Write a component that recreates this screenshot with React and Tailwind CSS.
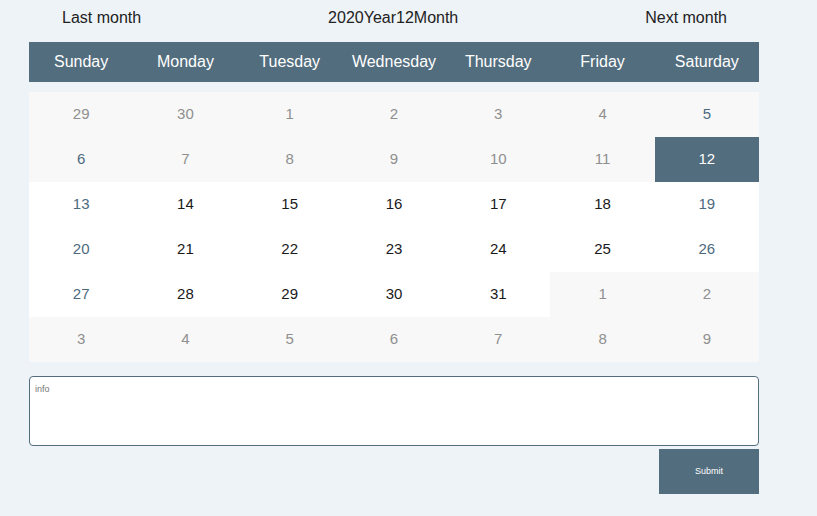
import { useState } from "react"

const WEEK = ["Sunday", "Monday", "Tuesday", "Wednesday", "Thursday", "Friday", "Saturday"]

function buildDays() {
  const days = []
  days.push({ n: 29, cur: false }, { n: 30, cur: false })
  for (let i = 1; i <= 31; i++) days.push({ n: i, cur: true })
  for (let i = 1; i <= 9; i++) days.push({ n: i, cur: false })
  return days
}

export default function App() {
  const [selected, setSelected] = useState(12)
  const [info, setInfo] = useState("")
  const days = buildDays()

  return (
    <div className="min-h-[516px] w-full bg-[#eef3f7] font-['Liberation_Sans',Arial,sans-serif]">
      <div className="ml-[29px] w-[730px]">
        <div className="h-[36px] pl-[33px] pr-[32px] flex items-center justify-between text-[16px] text-[#222]">
          <span className="cursor-pointer">Last month</span>
          <span>2020Year12Month</span>
          <span className="cursor-pointer">Next month</span>
        </div>

        <div className="mt-[6px] h-[40px] grid grid-cols-7 bg-[#526d7d] text-white text-[16px]">
          {WEEK.map(w => (
            <div key={w} className="flex items-center justify-center">{w}</div>
          ))}
        </div>

        <div className="mt-[10px] grid grid-cols-7">
          {days.map((d, i) => {
            const weekend = i % 7 === 0 || i % 7 === 6
            const past = !d.cur || d.n < selected
            const isSel = d.cur && d.n === selected
            let cls = "h-[45px] flex items-center justify-center text-[15px] cursor-pointer "
            if (isSel) cls += "bg-[#526d7d] text-white"
            else {
              cls += past ? "bg-[#f8f8f8] " : "bg-white "
              if (d.cur && weekend) cls += "text-[#4d6a80]"
              else if (past) cls += "text-[#8f8f8f]"
              else cls += "text-[#1a1a1a]"
            }
            return (
              <div key={i} className={cls} onClick={() => d.cur && setSelected(d.n)}>
                {d.n}
              </div>
            )
          })}
        </div>

        <textarea
          value={info}
          onChange={e => setInfo(e.target.value)}
          placeholder="info"
          className="mt-[14px] block w-full h-[70px] resize-none rounded-[4px] border border-[#526d7d] bg-white px-[5px] py-[6px] text-[9px] text-[#333] placeholder-[#777] outline-none"
        />

        <div className="mt-[3px] flex justify-end">
          <button className="w-[100px] h-[45px] bg-[#526d7d] text-white text-[9px]">Submit</button>
        </div>
      </div>
    </div>
  )
}
